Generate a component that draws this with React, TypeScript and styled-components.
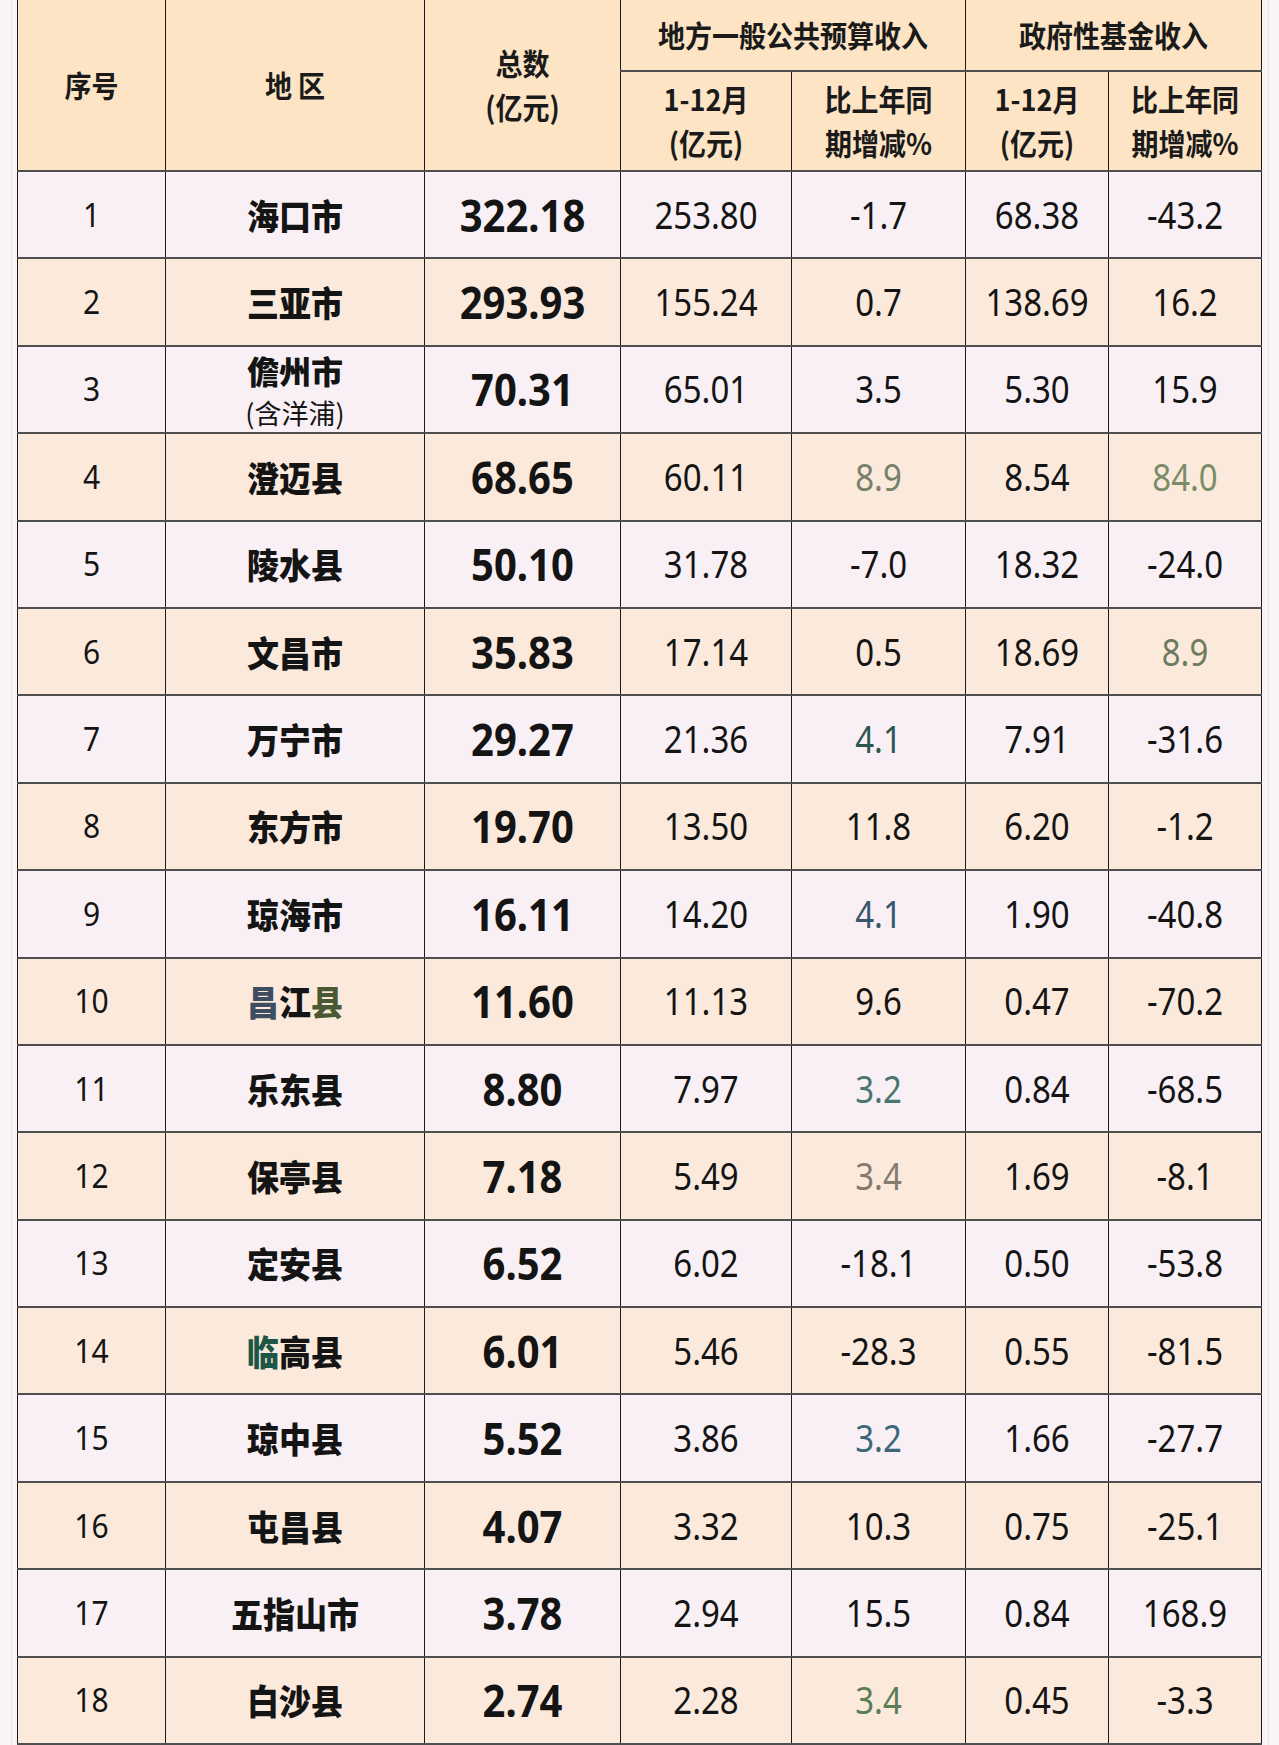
import React from 'react';
import styled, { createGlobalStyle } from 'styled-components';

const GlobalStyle = createGlobalStyle`
  html, body {
    margin: 0;
    padding: 0;
    background: #f9f2f6;
  }
  body {
    font-family: "Noto Sans", "Noto Sans CJK SC", sans-serif;
    color: #141414;
  }
`;

const Page = styled.div`
  width: 1279px;
  height: 1745px;
  overflow: hidden;
  box-sizing: border-box;
  background: #f9f2f6;
  padding-left: 11px;
`;

// faint frame lines around the table, as seen at both edges of the picture
const Frame = styled.div`
  width: 1258px;
  height: 100%;
  box-sizing: border-box;
  border-left: 1px solid #ebe2e7;
  border-right: 1px solid #ebe2e7;
  padding-left: 5px;
`;

const Table = styled.table`
  width: 1244px;
  border-collapse: collapse;
  table-layout: fixed;
`;

const HeadRow = styled.tr<{ $h: number }>`
  height: ${(p) => p.$h}px;
  background: #fce4c4;
`;

const BodyRow = styled.tr<{ $even: boolean }>`
  height: 87.4px;
  background: ${(p) => (p.$even ? '#fbeadc' : '#f9f0f5')};
`;

const Th = styled.th`
  border-left: 1.5px solid #1b1b1b;
  border-right: 1.5px solid #1b1b1b;
  border-bottom: 2px solid #4e4e4e;
  font-family: "Noto Sans CJK SC", "Noto Sans", sans-serif;
  font-weight: 700;
  font-size: 27px;
  line-height: 40px;
  text-align: center;
  vertical-align: middle;
  padding: 0;
  color: #1a1a1a;
`;

const Td = styled.td<{ $kind: 'seq' | 'name' | 'total' | 'num'; $color?: string }>`
  border-left: 1.5px solid #1b1b1b;
  border-right: 1.5px solid #1b1b1b;
  border-bottom: 2px solid #4e4e4e;
  text-align: center;
  vertical-align: middle;
  padding: 0;
  color: ${(p) => p.$color || '#141414'};
  font-family: ${(p) =>
    p.$kind === 'name'
      ? '"Noto Sans CJK SC", "Noto Sans", sans-serif'
      : '"Noto Sans", "Noto Sans CJK SC", sans-serif'};
  font-weight: ${(p) => (p.$kind === 'name' ? 900 : p.$kind === 'total' ? 700 : 400)};
  font-size: ${(p) =>
    p.$kind === 'total' ? 40 : p.$kind === 'name' ? 32 : p.$kind === 'seq' ? 30 : 33}px;
  line-height: 40px;
`;

// the source glyphs are a little taller than they are wide
const Tall = styled.span<{ $y: number }>`
  display: inline-block;
  transform: scaleY(${(p) => p.$y});
`;

const NameLine = styled.div`
  line-height: 46px;
`;

const SubName = styled.div`
  font-weight: 400;
  font-size: 27px;
  line-height: 39px;
`;

const Glyph = styled.span<{ $color: string }>`
  color: ${(p) => p.$color};
`;

type Row = {
  name: React.ReactNode;
  sub?: string;
  total: string;
  a: string;
  b: string;
  bColor?: string;
  c: string;
  d: string;
  dColor?: string;
};

const rows: Row[] = [
  { name: '海口市', total: '322.18', a: '253.80', b: '-1.7', c: '68.38', d: '-43.2' },
  { name: '三亚市', total: '293.93', a: '155.24', b: '0.7', c: '138.69', d: '16.2' },
  { name: '儋州市', sub: '(含洋浦)', total: '70.31', a: '65.01', b: '3.5', c: '5.30', d: '15.9' },
  { name: '澄迈县', total: '68.65', a: '60.11', b: '8.9', bColor: '#76806a', c: '8.54', d: '84.0', dColor: '#7b8c68' },
  { name: '陵水县', total: '50.10', a: '31.78', b: '-7.0', c: '18.32', d: '-24.0' },
  { name: '文昌市', total: '35.83', a: '17.14', b: '0.5', c: '18.69', d: '8.9', dColor: '#6f7b5e' },
  { name: '万宁市', total: '29.27', a: '21.36', b: '4.1', bColor: '#2f5552', c: '7.91', d: '-31.6' },
  { name: '东方市', total: '19.70', a: '13.50', b: '11.8', c: '6.20', d: '-1.2' },
  { name: '琼海市', total: '16.11', a: '14.20', b: '4.1', bColor: '#35586a', c: '1.90', d: '-40.8' },
  {
    name: (
      <>
        <Glyph $color="#3e4d62">昌</Glyph>江<Glyph $color="#4a5934">县</Glyph>
      </>
    ),
    total: '11.60', a: '11.13', b: '9.6', c: '0.47', d: '-70.2',
  },
  { name: '乐东县', total: '8.80', a: '7.97', b: '3.2', bColor: '#4a7570', c: '0.84', d: '-68.5' },
  { name: '保亭县', total: '7.18', a: '5.49', b: '3.4', bColor: '#857b6c', c: '1.69', d: '-8.1' },
  { name: '定安县', total: '6.52', a: '6.02', b: '-18.1', c: '0.50', d: '-53.8' },
  {
    name: (
      <>
        <Glyph $color="#1d5645">临</Glyph>高县
      </>
    ),
    total: '6.01', a: '5.46', b: '-28.3', c: '0.55', d: '-81.5',
  },
  { name: '琼中县', total: '5.52', a: '3.86', b: '3.2', bColor: '#3a6878', c: '1.66', d: '-27.7' },
  { name: '屯昌县', total: '4.07', a: '3.32', b: '10.3', c: '0.75', d: '-25.1' },
  { name: '五指山市', total: '3.78', a: '2.94', b: '15.5', c: '0.84', d: '168.9' },
  { name: '白沙县', total: '2.74', a: '2.28', b: '3.4', bColor: '#5c7c58', c: '0.45', d: '-3.3' },
];

const widths = [148, 259, 196, 171, 174, 143, 153];

const TwoLine = ({ top, bottom }: { top: string; bottom: string }) => (
  <Tall $y={1.1}>
    {top}
    <br />
    {bottom}
  </Tall>
);

export default function App() {
  return (
    <Page>
      <GlobalStyle />
      <Frame>
        <Table>
          <colgroup>
            {widths.map((w, i) => (
              <col key={i} style={{ width: w }} />
            ))}
          </colgroup>
          <thead>
            <HeadRow $h={71}>
              <Th rowSpan={2}>
                <Tall $y={1.1}>序号</Tall>
              </Th>
              <Th rowSpan={2}>
                <Tall $y={1.1}>地 区</Tall>
              </Th>
              <Th rowSpan={2}>
                <TwoLine top="总数" bottom="(亿元)" />
              </Th>
              <Th colSpan={2}>
                <Tall $y={1.1}>地方一般公共预算收入</Tall>
              </Th>
              <Th colSpan={2}>
                <Tall $y={1.1}>政府性基金收入</Tall>
              </Th>
            </HeadRow>
            <HeadRow $h={100}>
              <Th>
                <TwoLine top="1-12月" bottom="(亿元)" />
              </Th>
              <Th>
                <TwoLine top="比上年同" bottom="期增减%" />
              </Th>
              <Th>
                <TwoLine top="1-12月" bottom="(亿元)" />
              </Th>
              <Th>
                <TwoLine top="比上年同" bottom="期增减%" />
              </Th>
            </HeadRow>
          </thead>
          <tbody>
            {rows.map((r, i) => (
              <BodyRow key={i} $even={i % 2 === 1}>
                <Td $kind="seq">
                  <Tall $y={1.12}>{i + 1}</Tall>
                </Td>
                <Td $kind="name">
                  {r.sub ? (
                    <>
                      <NameLine>{r.name}</NameLine>
                      <SubName>{r.sub}</SubName>
                    </>
                  ) : (
                    <Tall $y={1.1}>{r.name}</Tall>
                  )}
                </Td>
                <Td $kind="total">
                  <Tall $y={1.14}>{r.total}</Tall>
                </Td>
                <Td $kind="num">
                  <Tall $y={1.14}>{r.a}</Tall>
                </Td>
                <Td $kind="num" $color={r.bColor}>
                  <Tall $y={1.14}>{r.b}</Tall>
                </Td>
                <Td $kind="num">
                  <Tall $y={1.14}>{r.c}</Tall>
                </Td>
                <Td $kind="num" $color={r.dColor}>
                  <Tall $y={1.14}>{r.d}</Tall>
                </Td>
              </BodyRow>
            ))}
          </tbody>
        </Table>
      </Frame>
    </Page>
  );
}
